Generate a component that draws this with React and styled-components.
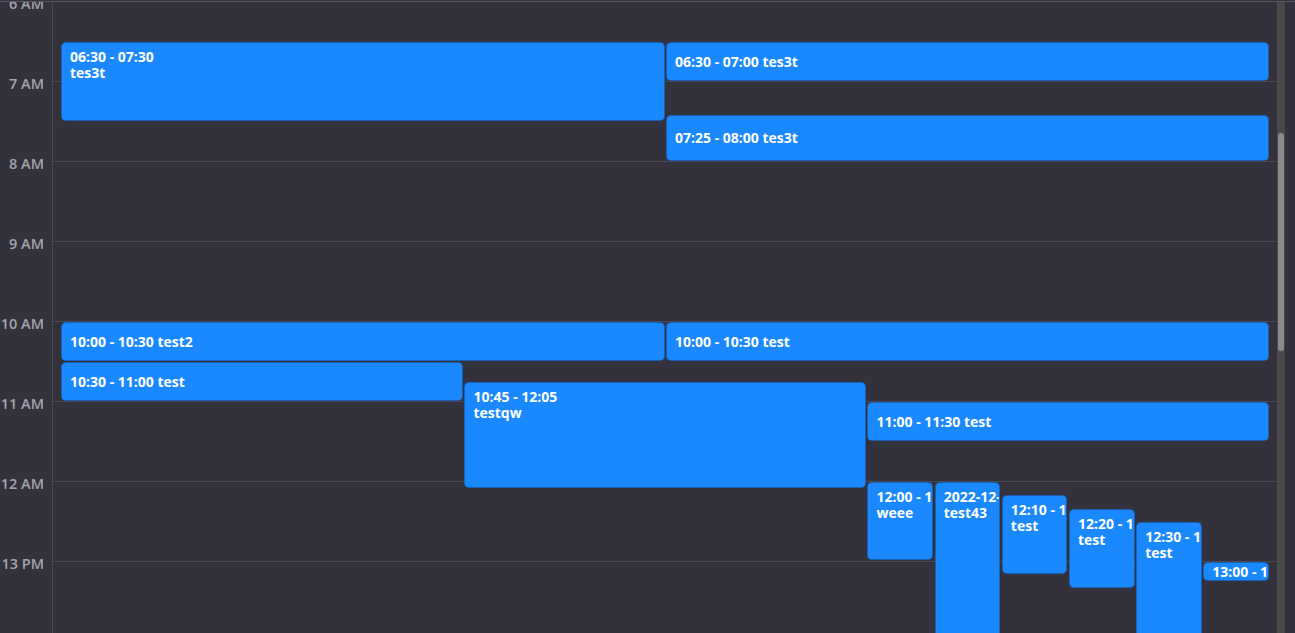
import React from "react";
import styled, { createGlobalStyle } from "styled-components";

const HOUR_HEIGHT = 80;
const FIRST_HOUR = 6;
const hours = [6, 7, 8, 9, 10, 11, 12, 13];

const events = [
  { start: "06:30", end: "07:30", title: "tes3t", x: 0, w: 1 / 2 },
  { start: "06:30", end: "07:00", title: "tes3t", x: 1 / 2, w: 1 / 2 },
  { start: "07:25", end: "08:00", title: "tes3t", x: 1 / 2, w: 1 / 2 },
  { start: "10:00", end: "10:30", title: "test2", x: 0, w: 1 / 2 },
  { start: "10:00", end: "10:30", title: "test", x: 1 / 2, w: 1 / 2 },
  { start: "10:30", end: "11:00", title: "test", x: 0, w: 1 / 3 },
  { start: "10:45", end: "12:05", title: "testqw", x: 1 / 3, w: 1 / 3 },
  { start: "11:00", end: "11:30", title: "test", x: 2 / 3, w: 1 / 3 },
  { start: "12:00", end: "12:59", title: "weee", x: 2 / 3, w: 1 / 18 },
  {
    start: "12:00",
    end: "14:30",
    label: "2022-12-20 12:00 - 2022-12-20 14:30",
    title: "test43",
    x: 2 / 3 + 1 / 18,
    w: 1 / 18,
  },
  { start: "12:10", end: "13:10", title: "test", x: 2 / 3 + 2 / 18, w: 1 / 18 },
  { start: "12:20", end: "13:20", title: "test", x: 2 / 3 + 3 / 18, w: 1 / 18 },
  { start: "12:30", end: "14:00", title: "test", x: 2 / 3 + 4 / 18, w: 1 / 18 },
  { start: "13:00", end: "13:15", title: "test", x: 2 / 3 + 5 / 18, w: 1 / 18 },
];

const toMinutes = (t) => {
  const [h, m] = t.split(":").map(Number);
  return h * 60 + m;
};

const hourLabel = (h) => `${h} ${h > 12 ? "PM" : "AM"}`;

const App = () => {
  return (
    <>
      <GlobalStyle />
      <Frame>
        <Calendar>
          <Gutter>
            {hours.map((h) => (
              <HourLabel key={h}>
                <span>{hourLabel(h)}</span>
              </HourLabel>
            ))}
          </Gutter>
          <Slots>
            {hours.map((h) => (
              <HourSlot key={h} />
            ))}
            <EventLayer>
              {events.map((ev, i) => {
                const start = toMinutes(ev.start);
                const duration = toMinutes(ev.end) - start;
                const top = ((start - FIRST_HOUR * 60) * HOUR_HEIGHT) / 60;
                const height = (duration * HOUR_HEIGHT) / 60 - 1;
                const shift = ev.x > 0 ? 0.5 : 0;
                const time = ev.label || `${ev.start} - ${ev.end}`;
                const stacked = duration >= 45;
                return (
                  <Event
                    key={i}
                    $stacked={stacked}
                    style={{
                      top,
                      height,
                      left: `calc(${ev.x * 100}% + ${shift}px)`,
                      width: `calc(${ev.w * 100}% - ${0.5 + shift * 2}px)`,
                    }}
                  >
                    {stacked ? (
                      <>
                        <EventLine>{time}</EventLine>
                        <EventLine>{ev.title}</EventLine>
                      </>
                    ) : (
                      <EventLine>
                        {time} {ev.title}
                      </EventLine>
                    )}
                  </Event>
                );
              })}
            </EventLayer>
          </Slots>
        </Calendar>
        <ScrollRail>
          <ScrollThumb />
        </ScrollRail>
      </Frame>
    </>
  );
};

const GlobalStyle = createGlobalStyle`
  html, body {
    margin: 0;
    padding: 0;
    background: #33323c;
    overflow: hidden;
  }
  body {
    padding-top: 1px;
    font-family: "Open Sans", "Noto Sans", sans-serif;
  }
`;

const Frame = styled.div`
  display: flex;
  height: 632px;
  border-top: 1px solid #5a5962;
  box-sizing: border-box;
  overflow: hidden;
`;

const Calendar = styled.div`
  flex: 1;
  display: flex;
  align-items: flex-start;
  overflow: hidden;
`;

const Gutter = styled.div`
  width: 52px;
  flex-shrink: 0;
  align-self: stretch;
  border-right: 1px solid #4a4953;
`;

const HourLabel = styled.div`
  display: flow-root;
  height: ${HOUR_HEIGHT}px;
  padding-right: 8px;
  text-align: right;
  box-sizing: border-box;
  span {
    display: block;
    margin-top: -6px;
    font-size: 14.5px;
    line-height: 16px;
    font-weight: 600;
    color: #a5a4ad;
    white-space: nowrap;
  }
`;

const Slots = styled.div`
  flex: 1;
  position: relative;
`;

const HourSlot = styled.div`
  height: ${HOUR_HEIGHT}px;
  border-bottom: 1px solid #4a4953;
  box-sizing: border-box;
`;

const EventLayer = styled.div`
  position: absolute;
  top: 0;
  bottom: 0;
  left: 8px;
  right: 7px;
`;

const Event = styled.div`
  position: absolute;
  box-sizing: border-box;
  display: flex;
  flex-direction: column;
  justify-content: ${(p) => (p.$stacked ? "flex-start" : "center")};
  padding: ${(p) => (p.$stacked ? "6px 8px" : "0 8px")};
  background: #1a88ff;
  border: 1px solid rgba(20, 30, 50, 0.35);
  border-radius: 5px;
  overflow: hidden;
  color: #ffffff;
`;

const EventLine = styled.div`
  font-size: 14px;
  line-height: 16px;
  font-weight: 700;
  white-space: nowrap;
`;

const ScrollRail = styled.div`
  width: 8px;
  margin-right: 10px;
  background: #494949;
  flex-shrink: 0;
`;

const ScrollThumb = styled.div`
  margin: 131px 1px 0;
  height: 218px;
  border-radius: 4px;
  background: #8b8b8b;
`;

export default App;
